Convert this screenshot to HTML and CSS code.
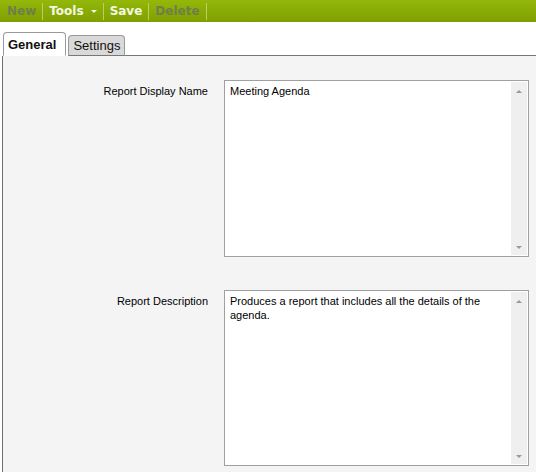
FILE: index.html
```html
<!DOCTYPE html>
<html>
<head>
<meta charset="utf-8">
<link rel="stylesheet" href="styles.css">
</head>
<body>
<div class="toolbar">
  <span class="tb-item disabled">New</span>
  <span class="sep"></span>
  <span class="tb-item active">Tools <span class="caret"></span></span>
  <span class="sep"></span>
  <span class="tb-item active">Save</span>
  <span class="sep"></span>
  <span class="tb-item disabled">Delete</span>
  <span class="sep"></span>
</div>
<div class="tabs">
  <div class="tab current">General</div>
  <div class="tab">Settings</div>
  <div class="tab-fill"></div>
</div>
<div class="panel">
  <div class="form">
    <label class="label">Report Display Name</label>
    <div class="field">
      <div class="text">Meeting Agenda</div>
      <div class="scroll"><span class="up"></span><span class="down"></span></div>
    </div>
    <label class="label">Report Description</label>
    <div class="field second">
      <div class="text">Produces a report that includes all the details of the agenda.</div>
      <div class="scroll"><span class="up"></span><span class="down"></span></div>
    </div>
  </div>
</div>
</body>
</html>
```
FILE: styles.css
```css
html, body { margin: 0; padding: 0; background: #fff; }
body { width: 536px; height: 472px; overflow: hidden; font-family: "Liberation Sans", Arial, sans-serif; }

.toolbar {
  height: 22px;
  display: flex;
  align-items: center;
  background: linear-gradient(#93b80a, #7f9f00);
  font-family: "DejaVu Sans", Verdana, sans-serif;
  font-weight: bold;
  font-size: 12px;
  padding-left: 7px;
}
.tb-item { display: flex; align-items: center; }
.tb-item.disabled { color: #6e7f4a; }
.tb-item.active { color: #f4f8e0; }
.caret {
  display: inline-block;
  margin-left: 7px;
  width: 0; height: 0;
  border-left: 3px solid transparent;
  border-right: 3px solid transparent;
  border-top: 3px solid #f4f8e0;
}
.sep {
  width: 1px;
  height: 17px;
  background: #b9d060;
  margin: 0 6px;
}

.tabs {
  display: flex;
  align-items: flex-end;
  margin-top: 10px;
  padding-left: 3px;
  height: 24px;
}
.tab {
  font-family: "Liberation Sans", Arial, sans-serif;
  font-size: 13px;
  color: #111;
  box-sizing: border-box;
  border: 1px solid #999;
  border-bottom: 1px solid #777;
  border-radius: 4px 4px 0 0;
  background: #d9d9d9;
  height: 21px;
  padding: 2px 4px 0 4px;
  margin-right: 2px;
}
.tab.current {
  background: #fff;
  height: 24px;
  border-bottom-color: #fff;
  padding: 4px 9px 0 4px;
  font-weight: bold;
}
.tab-fill { flex: 1; height: 1px; border-bottom: 1px solid #777; margin-left: -2px; align-self: flex-end; }

.panel {
  margin-left: 2px;
  border-left: 1px solid #707070;
  background: #f4f4f4;
  height: 416px;
  padding-top: 24px;
  box-sizing: border-box;
}
.form {
  display: grid;
  grid-template-columns: 205px 305px;
  column-gap: 16px;
  row-gap: 33px;
  font-size: 11px;
  color: #000;
}
.label {
  text-align: right;
  padding-top: 5px;
}
.field {
  height: 177px;
  box-sizing: border-box;
  border: 1px solid #a0a0a0;
  background: #fff;
  display: flex;
}
.field.second { height: 176px; }
.text {
  flex: 1;
  padding: 3px 5px;
  line-height: 14px;
}
.scroll {
  width: 16px;
  background: #efefef;
  margin: 1px 1px 1px 0;
  display: flex;
  flex-direction: column;
  justify-content: space-between;
  align-items: center;
  padding: 8px 0 6px;
}
.up, .down {
  width: 0; height: 0;
  border-left: 3px solid transparent;
  border-right: 3px solid transparent;
}
.up { border-bottom: 3px solid #999; }
.down { border-top: 3px solid #999; }
```
